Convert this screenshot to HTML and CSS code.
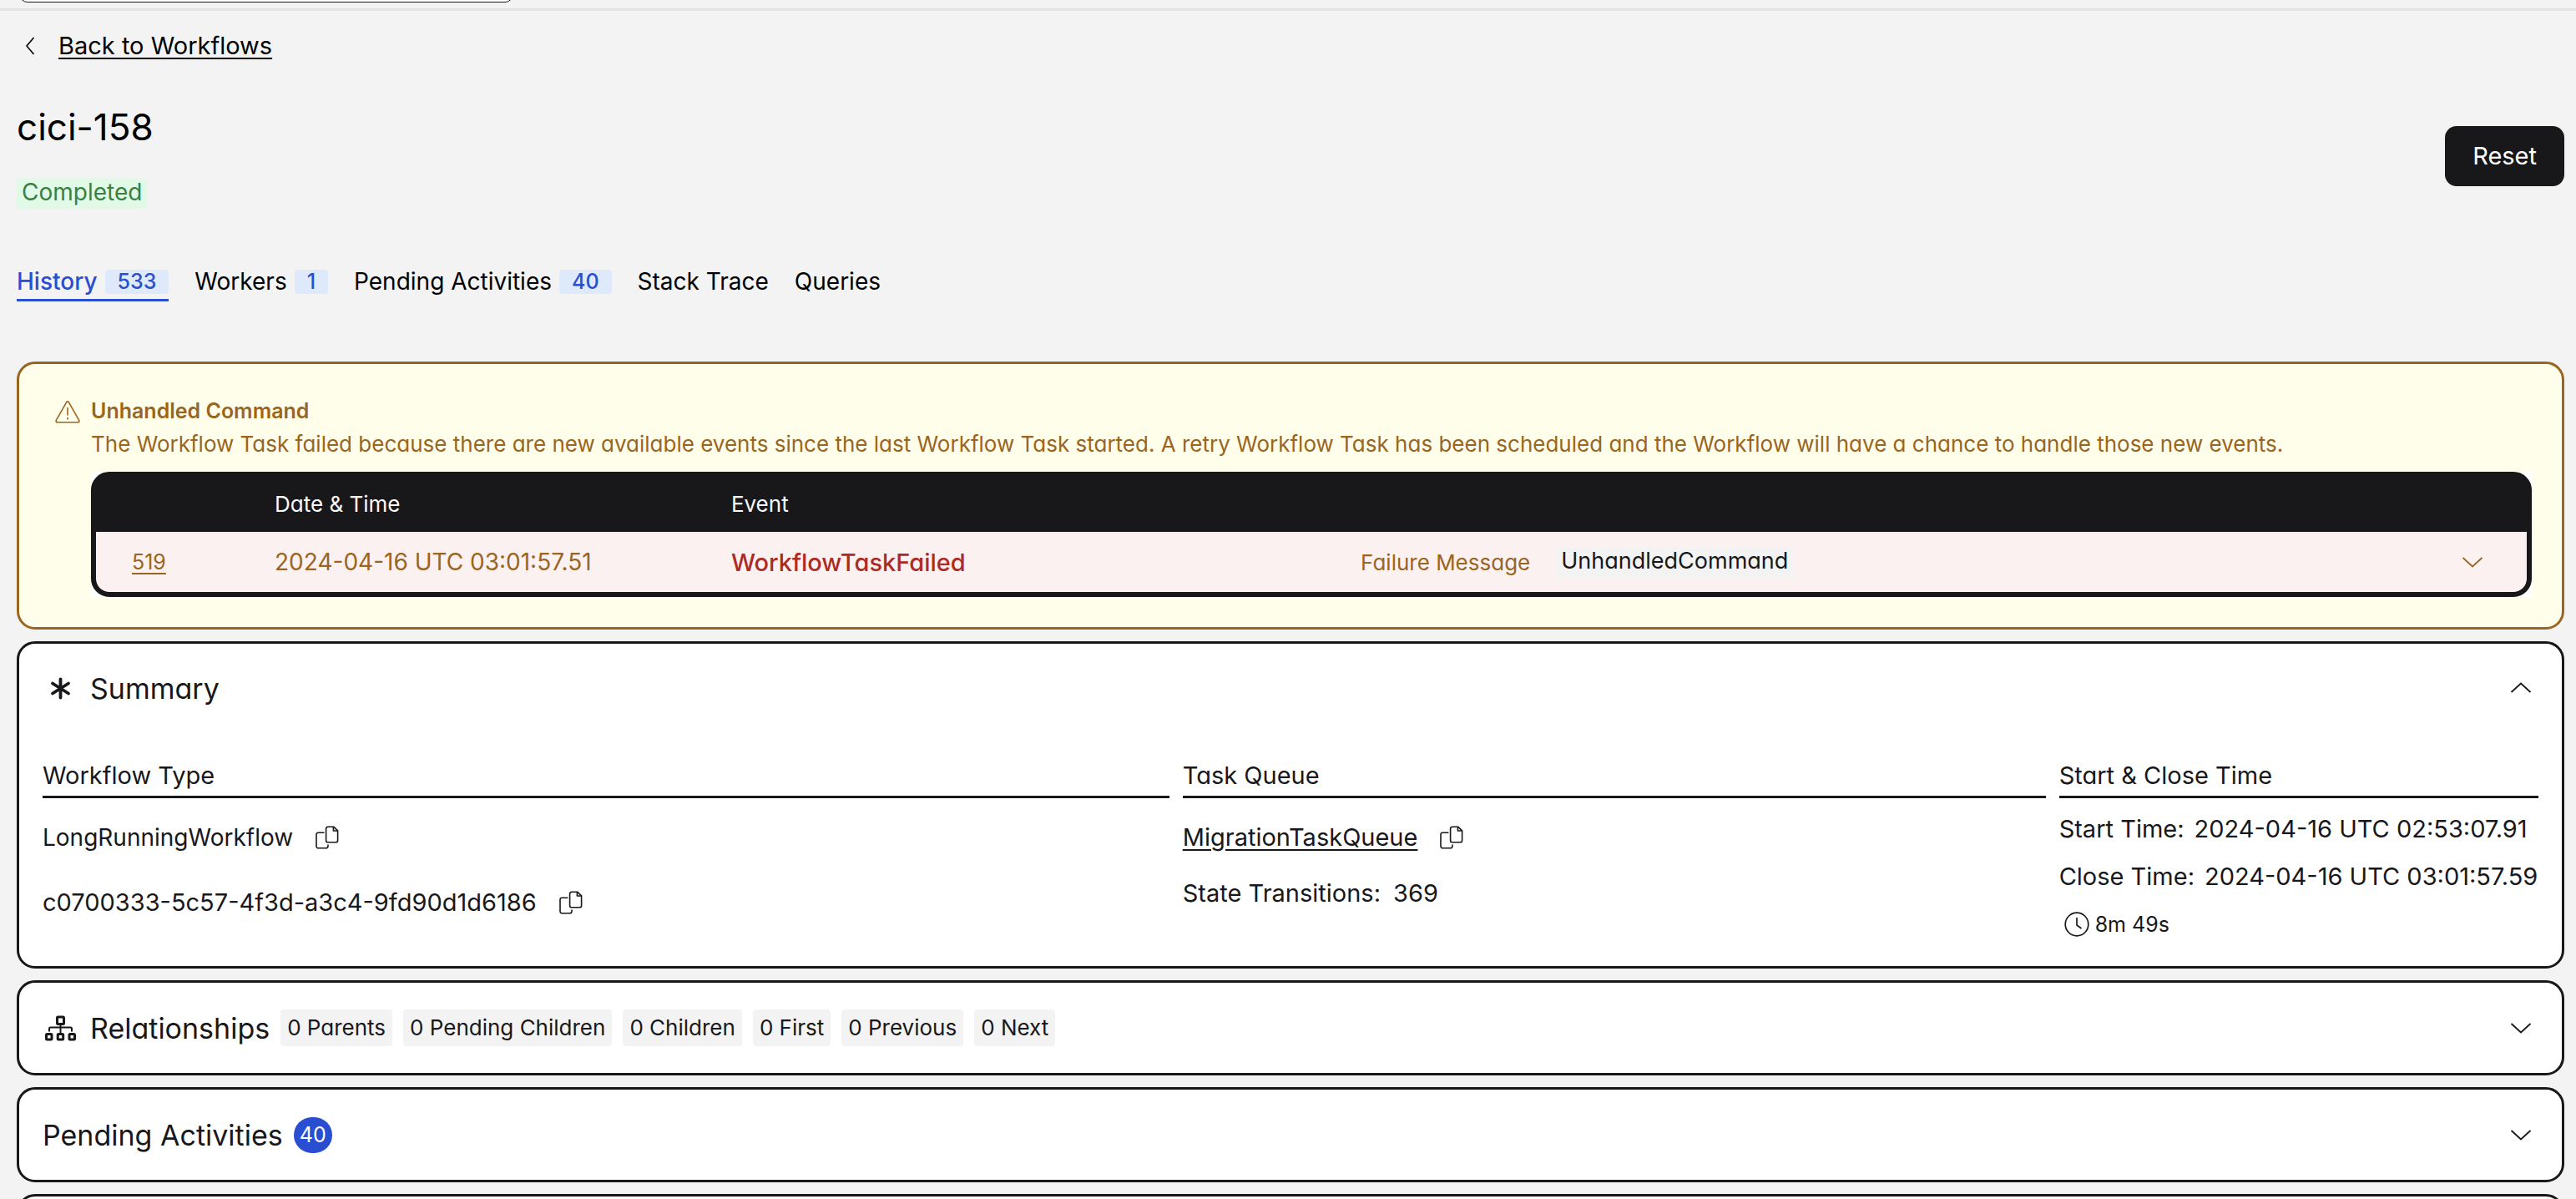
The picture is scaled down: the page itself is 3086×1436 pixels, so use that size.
FILE: index.html
```html
<!DOCTYPE html>
<html lang="en">
<head>
<meta charset="utf-8">
<title>cici-158 | Workflow History</title>
<link rel="stylesheet" href="styles.css">
</head>
<body>
<svg class="sprite" aria-hidden="true">
  <symbol id="copy" viewBox="0 0 28 28"><g fill="none" stroke="currentColor" stroke-width="1.6" stroke-linejoin="round"><path d="M15 1.2h6.6l5 4.6v11.6a2.4 2.4 0 0 1-2.4 2.4H15a2.4 2.4 0 0 1-2.4-2.4V3.600A2.400 2.400 0 0 1 15 1.200z"/><path d="M21.400 1.500v4.500h5"/><path d="M10.400 8.200H3.200A2.200 2.200 0 0 0 1 10.400v14A2.400 2.400 0 0 0 3.400 26.800h9.200a2.400 2.400 0 0 0 2.400-2.400v-2"/></g></symbol>
  <symbol id="down" viewBox="0 0 42 42"><path d="M9.500 16 21 26.500 32.500 16" fill="none" stroke="currentColor" stroke-width="1.8"/></symbol>
  <symbol id="up" viewBox="0 0 42 42"><path d="M9.500 26 21 15.500 32.500 26" fill="none" stroke="currentColor" stroke-width="1.8"/></symbol>
</svg>

<header class="topbar"><input class="topbar-search" type="text" aria-label="Search"></header>

<main class="page">
  <a class="back" href="#">
    <svg class="back-icon" viewBox="0 0 34 28"><path d="M20.500 4 12 14l8.500 10" fill="none" stroke="currentColor" stroke-width="1.600"/></svg>
    <span class="link">Back to Workflows</span>
  </a>

  <div class="title-row">
    <div class="title-block">
      <h1 class="title">cici-158</h1>
      <span class="status">Completed</span>
    </div>
    <button class="reset" type="button">Reset</button>
  </div>

  <nav class="tabs">
    <a class="tab tab-active" href="#">History <span class="count">533</span></a>
    <a class="tab" href="#">Workers <span class="count">1</span></a>
    <a class="tab" href="#">Pending Activities <span class="count">40</span></a>
    <a class="tab" href="#">Stack Trace</a>
    <a class="tab" href="#">Queries</a>
  </nav>

  <section class="alert">
    <svg class="alert-icon" viewBox="0 0 30 30"><g fill="none" stroke="currentColor" stroke-width="1.600" stroke-linejoin="round"><path d="M13.700 2.600 1.300 24.400a1.600 1.600 0 0 0 1.400 2.400h24.600a1.600 1.600 0 0 0 1.400-2.400L16.300 2.600a1.500 1.500 0 0 0-2.600 0z"/><path d="M15 9v9.500M15 21v2.400"/></g></svg>
    <div class="alert-body">
      <h2 class="alert-title">Unhandled Command</h2>
      <p class="alert-text">The Workflow Task failed because there are new available events since the last Workflow Task started. A retry Workflow Task has been scheduled and the Workflow will have a chance to handle those new events.</p>
      <div class="table-back">
        <div class="table-frame">
          <table class="events">
            <colgroup><col class="col-id"><col class="col-date"><col class="col-event"><col><col class="col-toggle"></colgroup>
            <thead>
              <tr><th></th><th>Date &amp; Time</th><th>Event</th><th></th><th></th></tr>
            </thead>
            <tbody>
              <tr>
                <td class="cell-id"><a class="link" href="#">519</a></td>
                <td class="cell-date">2024-04-16 UTC 03:01:57.51</td>
                <td class="cell-event">WorkflowTaskFailed</td>
                <td><div class="failure"><span>Failure Message</span><code class="code">UnhandledCommand</code></div></td>
                <td><button class="icon-button" type="button" aria-label="Expand event"><svg class="chevron" viewBox="0 0 42 42"><use href="#down"/></svg></button></td>
              </tr>
            </tbody>
          </table>
        </div>
      </div>
    </div>
  </section>

  <section class="card">
    <h2 class="card-heading">
      <button class="card-toggle card-toggle-open" type="button">
        <svg class="card-icon" viewBox="0 0 44 44"><path d="M21.500 11.500v22M12 16.500l19 12M31 16.500l-19 12" fill="none" stroke="currentColor" stroke-width="3.800" stroke-linecap="round"/></svg>
        <span>Summary</span>
        <svg class="chevron" viewBox="0 0 42 42"><use href="#up"/></svg>
      </button>
    </h2>
    <div class="summary">
      <div>
        <h3 class="column-title">Workflow Type</h3>
        <div class="column-list list-wide">
          <div class="value"><span class="name">LongRunningWorkflow</span><button class="icon-button" type="button" aria-label="Copy type"><svg class="copy" viewBox="0 0 28 28"><use href="#copy"/></svg></button></div>
          <div class="value"><span>c0700333-5c57-4f3d-a3c4-9fd90d1d6186</span><button class="icon-button" type="button" aria-label="Copy run id"><svg class="copy" viewBox="0 0 28 28"><use href="#copy"/></svg></button></div>
        </div>
      </div>
      <div>
        <h3 class="column-title">Task Queue</h3>
        <div class="column-list list-medium">
          <div class="value"><a class="link" href="#">MigrationTaskQueue</a><button class="icon-button" type="button" aria-label="Copy task queue"><svg class="copy" viewBox="0 0 28 28"><use href="#copy"/></svg></button></div>
          <div class="pair"><span>State Transitions:</span><span>369</span></div>
        </div>
      </div>
      <div>
        <h3 class="column-title">Start &amp; Close Time</h3>
        <div class="column-list list-narrow">
          <div class="pair"><span>Start Time:</span><span>2024-04-16 UTC 02:53:07.91</span></div>
          <div class="pair"><span>Close Time:</span><span>2024-04-16 UTC 03:01:57.59</span></div>
          <div class="duration"><svg class="clock" viewBox="0 0 30 30"><g fill="none" stroke="currentColor" stroke-width="1.700"><circle cx="15" cy="15" r="13.800"/><path d="M15 7v9l5.500 4"/></g></svg><span>8m 49s</span></div>
        </div>
      </div>
    </div>
  </section>

  <section class="card">
    <h2 class="card-heading">
      <button class="card-toggle" type="button">
        <svg class="card-icon" viewBox="0 0 44 44"><g fill="none" stroke="currentColor" stroke-width="3"><rect x="17.500" y="9" width="8" height="8.500" rx="1"/><rect x="4.500" y="29.500" width="6.500" height="6.500" rx="1"/><rect x="18.200" y="29.500" width="6.500" height="6.500" rx="1"/><rect x="32" y="29.500" width="6.500" height="6.500" rx="1"/></g><path d="M21.500 18v10M8 26.500V23q0-1.500 1.500-1.500h24q1.500 0 1.500 1.500v3.500" fill="none" stroke="currentColor" stroke-width="2"/></svg>
        <span>Relationships</span>
        <span class="chips">
          <span class="chip">0 Parents</span>
          <span class="chip">0 Pending Children</span>
          <span class="chip">0 Children</span>
          <span class="chip">0 First</span>
          <span class="chip">0 Previous</span>
          <span class="chip">0 Next</span>
        </span>
        <svg class="chevron" viewBox="0 0 42 42"><use href="#down"/></svg>
      </button>
    </h2>
  </section>

  <section class="card">
    <h2 class="card-heading">
      <button class="card-toggle" type="button">
        <span>Pending Activities</span>
        <span class="bubble">40</span>
        <svg class="chevron" viewBox="0 0 42 42"><use href="#down"/></svg>
      </button>
    </h2>
  </section>

  <section class="card card-empty"></section>
</main>
</body>
</html>
```

FILE: styles.css
```css
* { box-sizing: border-box; }

:root {
  --ink: #18181b;
  --paper: #f3f3f3;
  --amber: #996522;
  --blue: #294ed1;
  --small: 25px;
  --text: 26px;
  --body: 28px;
  --label: 29px;
}

body {
  margin: 0;
  height: 100vh;
  overflow: hidden;
  background: var(--paper);
  color: var(--ink);
  font-family: Inter, sans-serif;
  font-size: var(--body);
}

h1, h2, h3, p { margin: 0; font-weight: 400; }
button { font: inherit; color: inherit; border: 0; background: none; padding: 0; cursor: pointer; }
svg { display: block; flex: none; }
a { color: inherit; text-decoration: none; }

.sprite { position: absolute; width: 0; height: 0; }

.link {
  text-decoration: underline;
  text-decoration-thickness: 2px;
  text-underline-offset: 4px;
}

/* Top bar */
.topbar {
  display: flex;
  align-items: flex-end;
  height: 13px;
  padding: 0 23px 7px;
  border-bottom: 3px solid #e2e2e2;
}
.topbar-search {
  width: 592px;
  height: 60px;
  border: 1px solid var(--ink);
  border-radius: 10px;
  background: #fff;
}

.page { padding: 22px 14px 0 20px; }

.back {
  display: inline-flex;
  align-items: center;
  gap: 16px;
  font-size: var(--label);
  line-height: 40px;
  color: #000;
  vertical-align: top;
}
.back-icon { width: 34px; height: 28px; }

/* Title */
.title-row {
  display: flex;
  align-items: center;
  justify-content: space-between;
  margin-top: 49px;
}
.title-block {
  display: flex;
  flex-direction: column;
  align-items: flex-start;
  gap: 34px;
}
.title { font-size: 44px; line-height: 56px; color: #000; font-feature-settings: "cv11"; }
.status {
  padding: 0 6px 4px;
  border-radius: 4px;
  background: #e0fae7;
  color: #3b8043;
  line-height: 32px;
}
.reset {
  padding: 0 33px;
  border-radius: 14px;
  background: var(--ink);
  color: #fff;
  font-size: var(--label);
  line-height: 72px;
}

/* Tabs */
.tabs { display: flex; gap: 31px; margin-top: 70px; }
.tab {
  display: flex;
  align-items: center;
  gap: 9px;
  padding-bottom: 4px;
  border-bottom: 3px solid transparent;
  color: #000;
  line-height: 34px;
}
.tab-active { border-color: var(--blue); color: var(--blue); font-weight: 500; }
.count {
  padding: 0 15px 1px;
  border-radius: 4px;
  background: #dee9fb;
  color: var(--blue);
  font-size: var(--small);
  font-weight: 500;
  line-height: 28px;
}

/* Alert */
.alert {
  display: flex;
  gap: 13px;
  margin-top: 72px;
  padding: 37px 36px 36px 43px;
  border: 3px solid var(--amber);
  border-radius: 22px;
  background: #fffeea;
  color: var(--amber);
  font-size: var(--text);
  font-feature-settings: "cv11";
}
.alert-icon { width: 30px; height: 30px; margin-top: 6px; }
.alert-body { flex: 1; min-width: 0; }
.alert-title { font-size: var(--small); font-weight: 600; line-height: 39px; font-feature-settings: normal; }
.alert-text { line-height: 39px; }

.table-back { margin-top: 14px; background: #fff; }
.table-frame {
  overflow: hidden;
  border: 6px solid var(--ink);
  border-radius: 22px;
  background: var(--ink);
}
.events { width: 100%; table-layout: fixed; border-collapse: collapse; }
.col-id { width: 7.35%; }
.col-date { width: 18.78%; }
.col-event { width: 25.9%; }
.col-toggle { width: 86px; }
.events th {
  height: 66px;
  padding: 0 0 2px;
  color: #f8f8f8;
  font-weight: 400;
  text-align: left;
}
.events td { height: 72px; padding: 0; background: #fcf1f1; }
.events tr td:first-child { border-bottom-left-radius: 14px; padding-left: 43px; }
.events tr td:last-child { border-bottom-right-radius: 14px; }
.events .cell-id { font-size: var(--small); }
.events .cell-date { font-size: var(--body); }
.events .cell-event { font-size: var(--label); font-weight: 500; color: #ac2b25; }
.failure { display: flex; align-items: center; gap: 30px; }
.code {
  padding: 0 7px 2px;
  background: var(--paper);
  color: var(--ink);
  font-family: inherit;
  font-size: 27px;
  line-height: 34px;
}
.icon-button { display: block; }
.chevron { width: 42px; height: 42px; }

/* Cards */
.card {
  margin-top: 14px;
  border: 3px solid var(--ink);
  border-radius: 22px;
  background: #fff;
}
.card-empty { height: 114px; }
.card-toggle {
  display: flex;
  align-items: center;
  gap: 13px;
  width: 100%;
  height: 108px;
  padding: 0 28px;
  font-size: 34px;
  text-align: left;
  font-feature-settings: "cv11";
}
.card-toggle-open { height: 106px; }
.card-icon { width: 44px; height: 44px; }
.card-toggle .chevron { margin-left: auto; }

.summary {
  display: grid;
  grid-template-columns: 47fr 36fr 20fr;
  gap: 16px;
  padding: 30px 28px 28px;
  line-height: 44px;
  font-size: var(--label);
  white-space: nowrap;
}
.column-title {
  padding-bottom: 2px;
  border-bottom: 3px solid var(--ink);
  font-size: var(--label);
  font-feature-settings: "cv11";
}
.column-list { display: flex; flex-direction: column; }
.list-wide { gap: 34px; padding-top: 25px; }
.list-medium { gap: 23px; padding-top: 25px; }
.list-narrow { gap: 13px; padding-top: 15px; }
.value { display: flex; align-items: center; gap: 27px; }
.name { font-size: var(--body); }
.pair { display: flex; gap: 15px; }
.list-narrow .pair { gap: 12px; }
.duration {
  display: flex;
  align-items: center;
  gap: 7px;
  padding-left: 6px;
  font-size: var(--small);
}
.copy { width: 28px; height: 28px; }
.clock { width: 30px; height: 30px; }

.chips { display: flex; gap: 13px; }
.chip {
  padding: 0 8px;
  border-radius: 4px;
  background: var(--paper);
  font-size: var(--text);
  line-height: 44px;
}
.bubble {
  width: 46px;
  border-radius: 22px;
  background: var(--blue);
  color: #fff;
  font-size: var(--small);
  line-height: 43px;
  text-align: center;
}
```
